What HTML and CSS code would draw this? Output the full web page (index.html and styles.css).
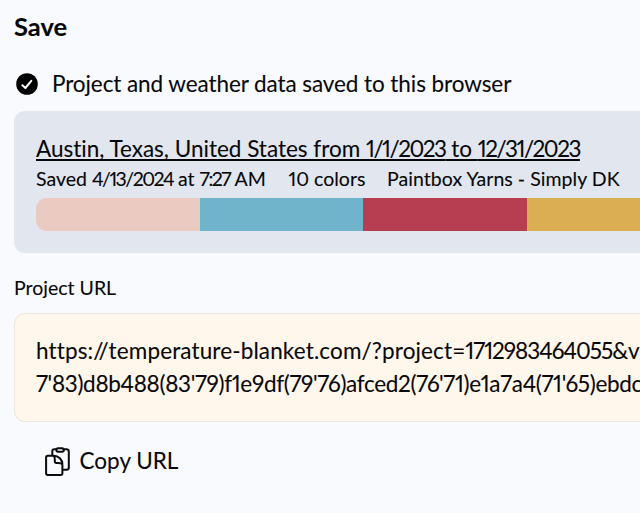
FILE: index.html
```html
<!DOCTYPE html>
<html lang="en">
<head>
<meta charset="utf-8">
<title>Save project</title>
<link rel="stylesheet" href="styles.css">
</head>
<body>
<main class="save">
  <h2 class="heading">Save</h2>
  <p class="status">
    <svg class="check" viewBox="0 0 22 22" aria-hidden="true"><circle cx="11" cy="11" r="10.8"/><path d="M6.4 12.2 9.4 15 15.3 7.8"/></svg>
    <span class="status-text">Project and weather data saved to this browser</span>
  </p>
  <section class="project">
    <a class="project-title" href="#">Austin, Texas, United States from <span class="date">1/1/2023</span> to <span class="date">12/31/2023</span></a>
    <div class="meta">
      <span class="saved">Saved <span class="date">4/13/2024</span> at <span class="date">7:27</span> AM</span>
      <span class="count">10 colors</span>
      <span class="yarn">Paintbox Yarns - Simply DK</span>
    </div>
    <div class="palette">
      <span class="swatch pink"></span><span class="swatch blue"></span><span class="swatch red"></span><span class="swatch gold"></span>
    </div>
  </section>
  <p class="label"><span>Project URL</span></p>
  <div class="url">
    <div><span class="line-one">https://temperature-blanket.com/?project=<span class="project-id">1712983464055</span>&amp;v</span></div>
    <div><span class="line-two">7'83)d8b488(83'79)f1e9df(79'76)afced2(76'71)e1a7a4(71'65)ebdc</span></div>
  </div>
  <button class="copy" type="button">
    <svg class="clipboard" viewBox="0 0 28 31" aria-hidden="true">
      <path d="M8.3 9V5.2Q8.3 3.3 10.2 3.3H12M19.4 3.3H22.4Q24.8 3.3 24.8 5.7V21.5Q24.8 23.7 22.6 23.7H19.4"/>
      <rect x="12.4" y="2.2" width="7.4" height="3.6" rx="1.7"/>
      <path d="M9.8 9.8H3.8Q2.1 9.8 2.1 11.5V27.2Q2.1 28.9 3.8 28.9H16.7Q18.4 28.9 18.4 27.2V18.3C18.4 13.6 14.5 9.8 9.8 9.8C10.8 11 10.8 12.2 10.8 13.6V15.2Q10.8 16.9 12.5 16.9H14.2C16 16.9 17.5 17.2 18.4 18.3"/>
    </svg>
    <span class="copy-text">Copy URL</span>
  </button>
</main>
</body>
</html>
```
FILE: styles.css
```css
* { box-sizing: border-box; }
body {
  margin: 0;
  overflow: hidden;
  background: #f9fafd;
  color: #08080a;
  font-family: Lato, "Noto Sans", sans-serif;
  font-size: 22.5px;
  font-variant-ligatures: none;
  font-variant-numeric: proportional-nums;
  -webkit-text-stroke: 0.1px;
  white-space: nowrap;
}
.save { padding: 10px 0 0 14px; }
.heading { margin: 0; font-size: 25.5px; line-height: 32px; font-weight: 700; }
.status { display: flex; align-items: center; gap: 14px; margin: 26px 0 0 2px; height: 32px; line-height: 32px; }
.status-text { letter-spacing: -0.08px; }
.check { width: 22px; height: 22px; }
.check circle { fill: #000; }
.check path { fill: none; stroke: #fff; stroke-width: 2; stroke-linecap: round; stroke-linejoin: round; }
.project { width: 626px; height: 142px; margin-top: 11px; padding: 22px 0 21px 22px; border-radius: 11px 0 0 11px; background: #e2e6ee; overflow: hidden; }
.project-title {
  display: block;
  width: max-content;
  color: inherit;
  line-height: 32px;
  text-decoration-thickness: 2px;
  text-underline-offset: 2px;
  text-decoration-skip-ink: none;
}
.date { letter-spacing: -1.5px; }
.meta { display: flex; height: 34px; line-height: 27px; font-size: 19.5px; }
.saved, .count { width: 252.5px; flex: none; }
.count { width: 98.5px; }
.yarn { letter-spacing: 0.05px; }
.palette { display: flex; height: 33px; border-radius: 11px 0 0 11px; overflow: hidden; margin-top: -1px; }
.swatch { width: 163.6px; flex: none; }
.pink { background: #ebcac2; }
.blue { background: #70b4cc; }
.red { background: #b73e50; }
.gold { background: #dbae53; }
.label { margin: 21px 0 0; line-height: 28px; font-size: 19.5px; }
.url { width: 626px; height: 109px; margin-top: 11px; padding: 21px 0 21px 21px; border: 1px solid #ede7e0; border-right: 0; border-radius: 11px 0 0 11px; background: #fff7eb; line-height: 32.5px; overflow: hidden; }
.line-one { letter-spacing: 0.13px; }
.project-id { letter-spacing: -1px; }
.line-two { letter-spacing: -0.32px; }
.copy { display: flex; align-items: center; gap: 7.5px; margin: 22px 0 0 30px; padding: 0; border: 0; background: none; color: inherit; font: inherit; line-height: 34px; }
.clipboard { width: 28px; height: 31px; fill: none; stroke: #0b0b0d; stroke-width: 2; stroke-linejoin: round; stroke-linecap: round; }
```
